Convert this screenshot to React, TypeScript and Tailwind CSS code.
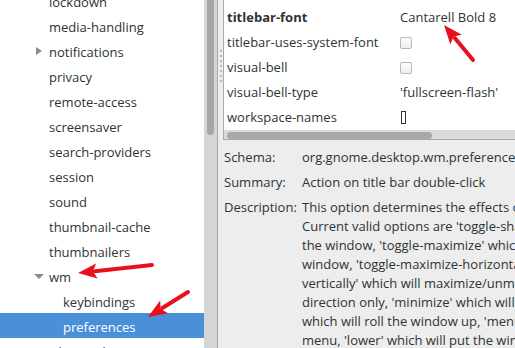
const tree = [
  { name: "lockdown", level: 0 },
  { name: "media-handling", level: 0 },
  { name: "notifications", level: 0, expander: "closed" },
  { name: "privacy", level: 0 },
  { name: "remote-access", level: 0 },
  { name: "screensaver", level: 0 },
  { name: "search-providers", level: 0 },
  { name: "session", level: 0 },
  { name: "sound", level: 0 },
  { name: "thumbnail-cache", level: 0 },
  { name: "thumbnailers", level: 0 },
  { name: "wm", level: 0, expander: "open" },
  { name: "keybindings", level: 1 },
  { name: "preferences", level: 1, selected: true },
  { name: "evolution-data-server", level: -1 },
];

const keys = [
  { key: "titlebar-font", value: "Cantarell Bold 8", bold: true },
  { key: "titlebar-uses-system-font", check: true },
  { key: "visual-bell", check: true },
  { key: "visual-bell-type", value: "'fullscreen-flash'" },
  { key: "workspace-names", empty: true },
];

const description = [
  "This option determines the effects of double-clicking on the title bar.",
  "Current valid options are 'toggle-shade', which will shade/unshade",
  "the window, 'toggle-maximize' which will maximize/unmaximize the",
  "window, 'toggle-maximize-horizontally' and 'toggle-maximize-",
  "vertically' which will maximize/unmaximize the window in that",
  "direction only, 'minimize' which will minimize the window, 'shade'",
  "which will roll the window up, 'menu' which will display the window",
  "menu, 'lower' which will put the window behind all the others,",
];

const arrows = [
  { from: [473, 60], to: [444, 25] },
  { from: [152, 265], to: [78, 273] },
  { from: [188, 292], to: [148, 317] },
];

function Arrow({ from, to }: { from: number[]; to: number[] }) {
  const dx = to[0] - from[0];
  const dy = to[1] - from[1];
  const len = Math.hypot(dx, dy);
  const ux = dx / len;
  const uy = dy / len;
  const bx = to[0] - ux * 19;
  const by = to[1] - uy * 19;
  const nx = -uy * 7.5;
  const ny = ux * 7.5;
  return (
    <g>
      <line
        x1={from[0]}
        y1={from[1]}
        x2={bx + ux * 2}
        y2={by + uy * 2}
        stroke="#e8111b"
        strokeWidth={4}
        strokeLinecap="round"
      />
      <polygon
        points={`${to[0]},${to[1]} ${bx + nx},${by + ny} ${bx + ux * 4},${by + uy * 4} ${bx - nx},${by - ny}`}
        fill="#e8111b"
      />
    </g>
  );
}

export default function App() {
  return (
    <div
      className="relative flex w-[515px] h-[348px] overflow-hidden bg-[#ededed] text-[13px] text-[#2e3436]"
      style={{ fontFamily: '"Open Sans", "Noto Sans", sans-serif' }}
    >
      {/* schema tree */}
      <div className="flex w-[218px] shrink-0 border-r border-[#a8a8a8]">
        <div className="w-[205px] bg-white overflow-hidden">
          <div className="-mt-[12px]">
            {tree.map((row) => (
              <div
                key={row.name}
                className={`flex items-center h-[25px] whitespace-nowrap ${
                  row.selected ? "bg-[#4a90d9] text-white" : ""
                } ${row.level === 1 ? "pl-[49px]" : row.level === -1 ? "pl-[23px]" : "pl-[35px]"}`}
              >
                <div className="w-[14px] flex items-center">
                  {row.expander === "closed" && (
                    <div className="w-0 h-0 border-y-[4.5px] border-y-transparent border-l-[6px] border-l-[#8b8e8f] ml-[1px]" />
                  )}
                  {row.expander === "open" && (
                    <div className="w-0 h-0 border-x-[5px] border-x-transparent border-t-[5px] border-t-[#8b8e8f] -ml-[1px] mt-[2px]" />
                  )}
                </div>
                <span className="pt-[4px]">{row.name}</span>
              </div>
            ))}
          </div>
        </div>
        <div className="w-[13px] bg-[#d5d5d5] px-[3px]">
          <div className="w-[7px] h-[145px] -mt-[10px] rounded-b-full bg-[#a6a6a6]" />
        </div>
      </div>

      {/* keys + details */}
      <div className="flex flex-1 flex-col min-w-0">
        <div className="flex h-[140px] shrink-0">
          <div className="w-[5px] flex flex-col items-center pt-[50px] gap-[3px]">
            {[0, 1, 2, 3, 4, 5, 6].map((i) => (
              <div key={i} className="w-[2px] h-[2px] bg-[#b8b8b8]" />
            ))}
          </div>
          <div className="flex-1 flex flex-col bg-white border-l border-b border-[#a8a8a8] min-w-0 overflow-hidden">
            <div className="pt-[5px] pl-[3px]">
              {keys.map((k) => (
                <div key={k.key} className="flex items-center h-[25px] whitespace-nowrap">
                  <span className={`w-[173px] ${k.bold ? "font-bold" : ""}`}>{k.key}</span>
                  {k.value && <span>{k.value}</span>}
                  {k.check && (
                    <div className="w-[12px] h-[12px] rounded-[2px] border border-[#b8b8b8] bg-gradient-to-b from-white to-[#ececec]" />
                  )}
                  {k.empty && <div className="w-[5px] h-[13px] border border-[#2e3436] ml-[1px]" />}
                </div>
              ))}
            </div>
            <div className="h-[10px] bg-[#dadada] px-[3px] pt-[2px]">
              <div className="w-[205px] h-[7px] rounded-full bg-[#a8a8a8]" />
            </div>
          </div>
        </div>

        <div className="grid grid-cols-[78px_1fr] gap-y-[6px] pl-[6px] pt-[8px] leading-[19px] whitespace-nowrap">
          <span>Schema:</span>
          <span>org.gnome.desktop.wm.preferences</span>
          <span>Summary:</span>
          <span>Action on title bar double-click</span>
          <span>Description:</span>
          <div className="flex flex-col">
            {description.map((line) => (
              <span key={line}>{line}</span>
            ))}
          </div>
        </div>
      </div>

      <svg className="absolute inset-0 pointer-events-none" width={515} height={348}>
        {arrows.map((a, i) => (
          <Arrow key={i} from={a.from} to={a.to} />
        ))}
      </svg>
    </div>
  );
}
